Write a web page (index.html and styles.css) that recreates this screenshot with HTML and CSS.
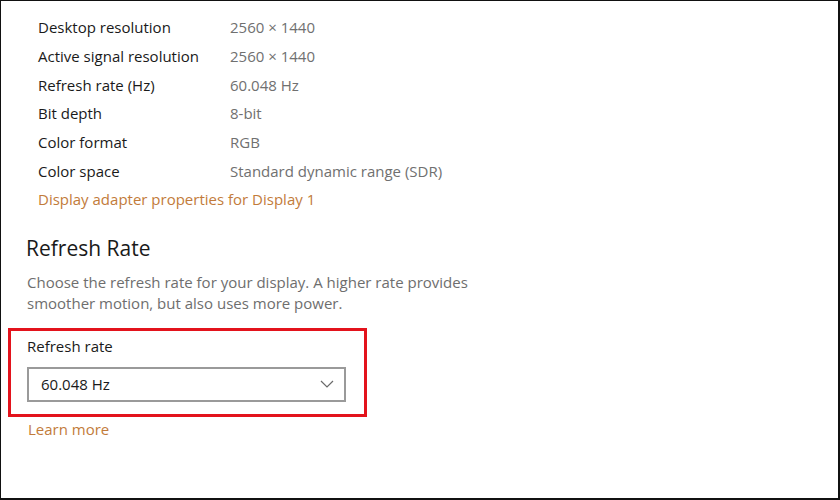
FILE: index.html
```html
<!DOCTYPE html>
<html lang="en">
<head>
<meta charset="utf-8">
<title>Display settings</title>
<link rel="stylesheet" href="styles.css">
</head>
<body>
<div class="frame">
  <div class="info">
    <div class="row"><span class="label">Desktop resolution</span><span class="value">2560 × 1440</span></div>
    <div class="row"><span class="label">Active signal resolution</span><span class="value">2560 × 1440</span></div>
    <div class="row"><span class="label">Refresh rate (Hz)</span><span class="value">60.048 Hz</span></div>
    <div class="row"><span class="label">Bit depth</span><span class="value">8-bit</span></div>
    <div class="row"><span class="label">Color format</span><span class="value">RGB</span></div>
    <div class="row"><span class="label">Color space</span><span class="value">Standard dynamic range (SDR)</span></div>
    <a class="link adapter" href="#">Display adapter properties for Display 1</a>
  </div>
  <section class="refresh">
    <h2 class="heading">Refresh Rate</h2>
    <p class="desc">Choose the refresh rate for your display. A higher rate provides smoother motion, but also uses more power.</p>
    <div class="highlight">
      <div class="field-label">Refresh rate</div>
      <div class="select">
        <span class="select-text">60.048 Hz</span>
        <svg class="chevron" width="14" height="8" viewBox="0 0 14 8"><path d="M1 1 L7 7 L13 1" fill="none" stroke="#6a6a6a" stroke-width="1.2"/></svg>
      </div>
    </div>
    <a class="link learn" href="#">Learn more</a>
  </section>
</div>
</body>
</html>
```
FILE: styles.css
```css
html, body {
  margin: 0;
  padding: 0;
  background: #ffffff;
}
body {
  font-family: "Open Sans", "Noto Sans", sans-serif;
  color: #1b1b1b;
}
.frame {
  width: 840px;
  height: 500px;
  box-sizing: border-box;
  border: 1px solid #111;
  border-width: 1px 2px 2px 1px;
  overflow: hidden;
}
.info {
  padding: 12px 0 0 37px;
  display: flex;
  flex-direction: column;
}
.row {
  display: flex;
  height: 28.7px;
  align-items: center;
  font-size: 15px;
}
.label {
  width: 192px;
  color: #1a1a1a;
}
.value {
  color: #707070;
}
.link {
  color: #c27b3a;
  text-decoration: none;
  font-size: 15px;
}
.adapter {
  height: 28.7px;
  line-height: 28.7px;
}
.refresh {
  padding-left: 7px;
}
.heading {
  margin: 20px 0 0 18px;
  font-size: 21px;
  font-weight: 400;
  line-height: 28px;
  color: #1a1a1a;
}
.desc {
  margin: 10px 0 0 19px;
  width: 460px;
  font-size: 15px;
  line-height: 21px;
  color: #6e6e6e;
}
.highlight {
  margin-top: 14px;
  width: 359px;
  box-sizing: border-box;
  border: 3px solid #e3131c;
  padding: 3px 0 12px 16px;
}
.field-label {
  font-size: 15px;
  line-height: 24px;
  color: #1a1a1a;
}
.select {
  margin-top: 9px;
  width: 319px;
  height: 35px;
  box-sizing: border-box;
  border: 2px solid #9a9a9a;
  display: flex;
  align-items: center;
  justify-content: space-between;
  padding: 0 10px 0 12px;
}
.select-text {
  font-size: 15px;
  color: #1a1a1a;
}
.chevron {
  display: block;
}
.learn {
  display: block;
  margin: 1px 0 0 20px;
  line-height: 22px;
}
```
